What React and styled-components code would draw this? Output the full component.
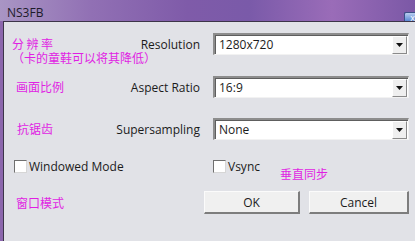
import React from "react";
import styled, { createGlobalStyle } from "styled-components";

const GlobalStyle = createGlobalStyle`
  html, body {
    margin: 0;
    padding: 0;
    background: #e1e2e7;
  }
  body {
    width: 415px;
    height: 241px;
    overflow: hidden;
    font-family: "Open Sans", "Noto Sans", "Noto Sans CJK SC", sans-serif;
    font-size: 12px;
    color: #1b1b1b;
  }
`;

const Window = styled.div`
  display: flex;
  flex-direction: column;
  width: 415px;
  height: 241px;
`;

const TitleBar = styled.div`
  display: flex;
  align-items: flex-start;
  height: 21px;
  padding-left: 7px;
  background: linear-gradient(
    90deg,
    #a995c4 0%,
    #9170b4 22%,
    #7f5ba9 45%,
    #7a5aa9 60%,
    #9a6cb8 80%,
    #7b58a6 100%
  );
`;

const Title = styled.span`
  margin-top: 4px;
  font-size: 12px;
  color: #1d1b2a;
`;

const CloseButton = styled.div`
  margin-left: auto;
  margin-top: 12px;
  width: 10px;
  height: 9px;
  border: 1px solid #3c4f86;
  border-right: none;
  border-radius: 2px 0 0 0;
  background: linear-gradient(180deg, #b8cdf0, #4f7fd0);
  color: #fff;
  font-size: 9px;
  line-height: 9px;
  text-align: right;
  overflow: hidden;
`;

const Frame = styled.div`
  display: flex;
  flex: 1;
  background: #8c67ad;
  padding-left: 3px;
`;

const Client = styled.div`
  flex: 1;
  display: flex;
  flex-direction: column;
  padding-top: 11px;
  background: #e1e2e7;
  border-top: 1px solid #3d3549;
  border-left: 1px solid #3d3549;
`;

const SettingRow = styled.div`
  display: grid;
  grid-template-columns: 196px 196px;
  column-gap: 13px;
  height: 22px;
  margin-bottom: ${(p) => p.$gap || 20}px;
`;

/* note and english label share one cell: note on the left, label on the right */
const LabelCell = styled.div`
  display: grid;
  grid-template-columns: 1fr;
  grid-template-rows: 22px;
  align-items: center;
  padding-left: ${(p) => p.$indent || 8}px;

  & > * {
    grid-area: 1 / 1;
  }
`;

const Note = styled.span`
  font-family: "Noto Sans CJK SC", sans-serif;
  font-size: 12px;
  line-height: 14px;
  color: #e01fe3;
  margin-top: ${(p) => p.$top || 0}px;
  margin-left: ${(p) => p.$left || 0}px;
  white-space: nowrap;
  justify-self: start;
  align-self: ${(p) => (p.$anchor ? "start" : "center")};
`;

const NoteLine = styled.span`
  display: block;
  letter-spacing: ${(p) => p.$spacing || 0}px;
`;

const Label = styled.span`
  font-size: 12px;
  color: #1b1b1b;
  justify-self: end;
`;

const Select = styled.div`
  display: flex;
  align-items: center;
  height: 22px;
  box-sizing: border-box;
  padding-left: 4px;
  background: #fff;
  border-top: 2px solid #8d8d8d;
  border-left: 2px solid #8d8d8d;
  border-bottom: 1px solid #f2f2f2;
  border-right: 1px solid #f2f2f2;
  box-shadow: inset 1px 1px 0 #5e5e5e;
`;

const SelectValue = styled.span`
  flex: 1;
  font-size: 12px;
  color: #1b1b1b;
`;

const DropButton = styled.div`
  display: flex;
  align-items: center;
  justify-content: center;
  width: 15px;
  height: 18px;
  box-sizing: border-box;
  margin-right: 1px;
  background: #efefef;
  border-top: 1px solid #fff;
  border-left: 1px solid #fff;
  border-bottom: 1px solid #8a8a8a;
  border-right: 1px solid #8a8a8a;
`;

const CheckRow = styled.div`
  display: grid;
  grid-template-columns: 196px 196px;
  column-gap: 13px;
  height: 13px;
  margin-bottom: 18px;
`;

const CheckCell = styled.label`
  display: flex;
  align-items: flex-start;
  padding-left: ${(p) => p.$indent || 0}px;
`;

const Box = styled.span`
  width: 13px;
  height: 13px;
  box-sizing: border-box;
  background: #fff;
  border-top: 1px solid #6f6f6f;
  border-left: 1px solid #6f6f6f;
  border-bottom: 1px solid #d6d6d6;
  border-right: 1px solid #d6d6d6;
  margin-right: 2px;
`;

const CheckText = styled.span`
  font-size: 12px;
  line-height: 13px;
`;

const Footer = styled.div`
  display: flex;
  align-items: flex-start;
  justify-content: space-between;
  padding-left: 12px;
  padding-right: 6px;
`;

const Buttons = styled.div`
  display: flex;
  gap: 9px;
`;

const Button = styled.button`
  width: ${(p) => p.$w}px;
  height: 23px;
  box-sizing: border-box;
  padding: 0;
  font-family: "Open Sans", "Noto Sans", sans-serif;
  font-size: 12px;
  color: #1b1b1b;
  background: #f0f0f0;
  border-top: 1px solid #fbfbfb;
  border-left: 1px solid #fbfbfb;
  border-bottom: 2px solid #7d7d7d;
  border-right: 2px solid #7d7d7d;
`;

const Arrow = () => (
  <svg width="7" height="4" viewBox="0 0 7 4">
    <path d="M0 0h7L3.5 4z" fill="#111" />
  </svg>
);

const Dropdown = ({ value }) => (
  <Select>
    <SelectValue>{value}</SelectValue>
    <DropButton>
      <Arrow />
    </DropButton>
  </Select>
);

export default function App() {
  return (
    <>
      <GlobalStyle />
      <Window>
        <TitleBar>
          <Title>NS3FB</Title>
          <CloseButton>x</CloseButton>
        </TitleBar>
        <Frame>
          <Client>
            <SettingRow $gap={21}>
              <LabelCell>
                <Note $anchor $top={4}>
                  <NoteLine $spacing={2.5}>分辨率</NoteLine>
                  <NoteLine>（卡的童鞋可以将其降低）</NoteLine>
                </Note>
                <Label>Resolution</Label>
              </LabelCell>
              <Dropdown value="1280x720" />
            </SettingRow>
            <SettingRow>
              <LabelCell $indent={12}>
                <Note>画面比例</Note>
                <Label>Aspect Ratio</Label>
              </LabelCell>
              <Dropdown value="16:9" />
            </SettingRow>
            <SettingRow>
              <LabelCell $indent={13}>
                <Note>抗锯齿</Note>
                <Label>Supersampling</Label>
              </LabelCell>
              <Dropdown value="None" />
            </SettingRow>
            <CheckRow>
              <CheckCell $indent={10}>
                <Box />
                <CheckText>Windowed Mode</CheckText>
              </CheckCell>
              <CheckCell>
                <Box />
                <CheckText>Vsync</CheckText>
                <Note $top={7} $left={20}>垂直同步</Note>
              </CheckCell>
            </CheckRow>
            <Footer>
              <Note $top={1}>窗口模式</Note>
              <Buttons>
                <Button $w={96}>OK</Button>
                <Button $w={100}>Cancel</Button>
              </Buttons>
            </Footer>
          </Client>
        </Frame>
      </Window>
    </>
  );
}
